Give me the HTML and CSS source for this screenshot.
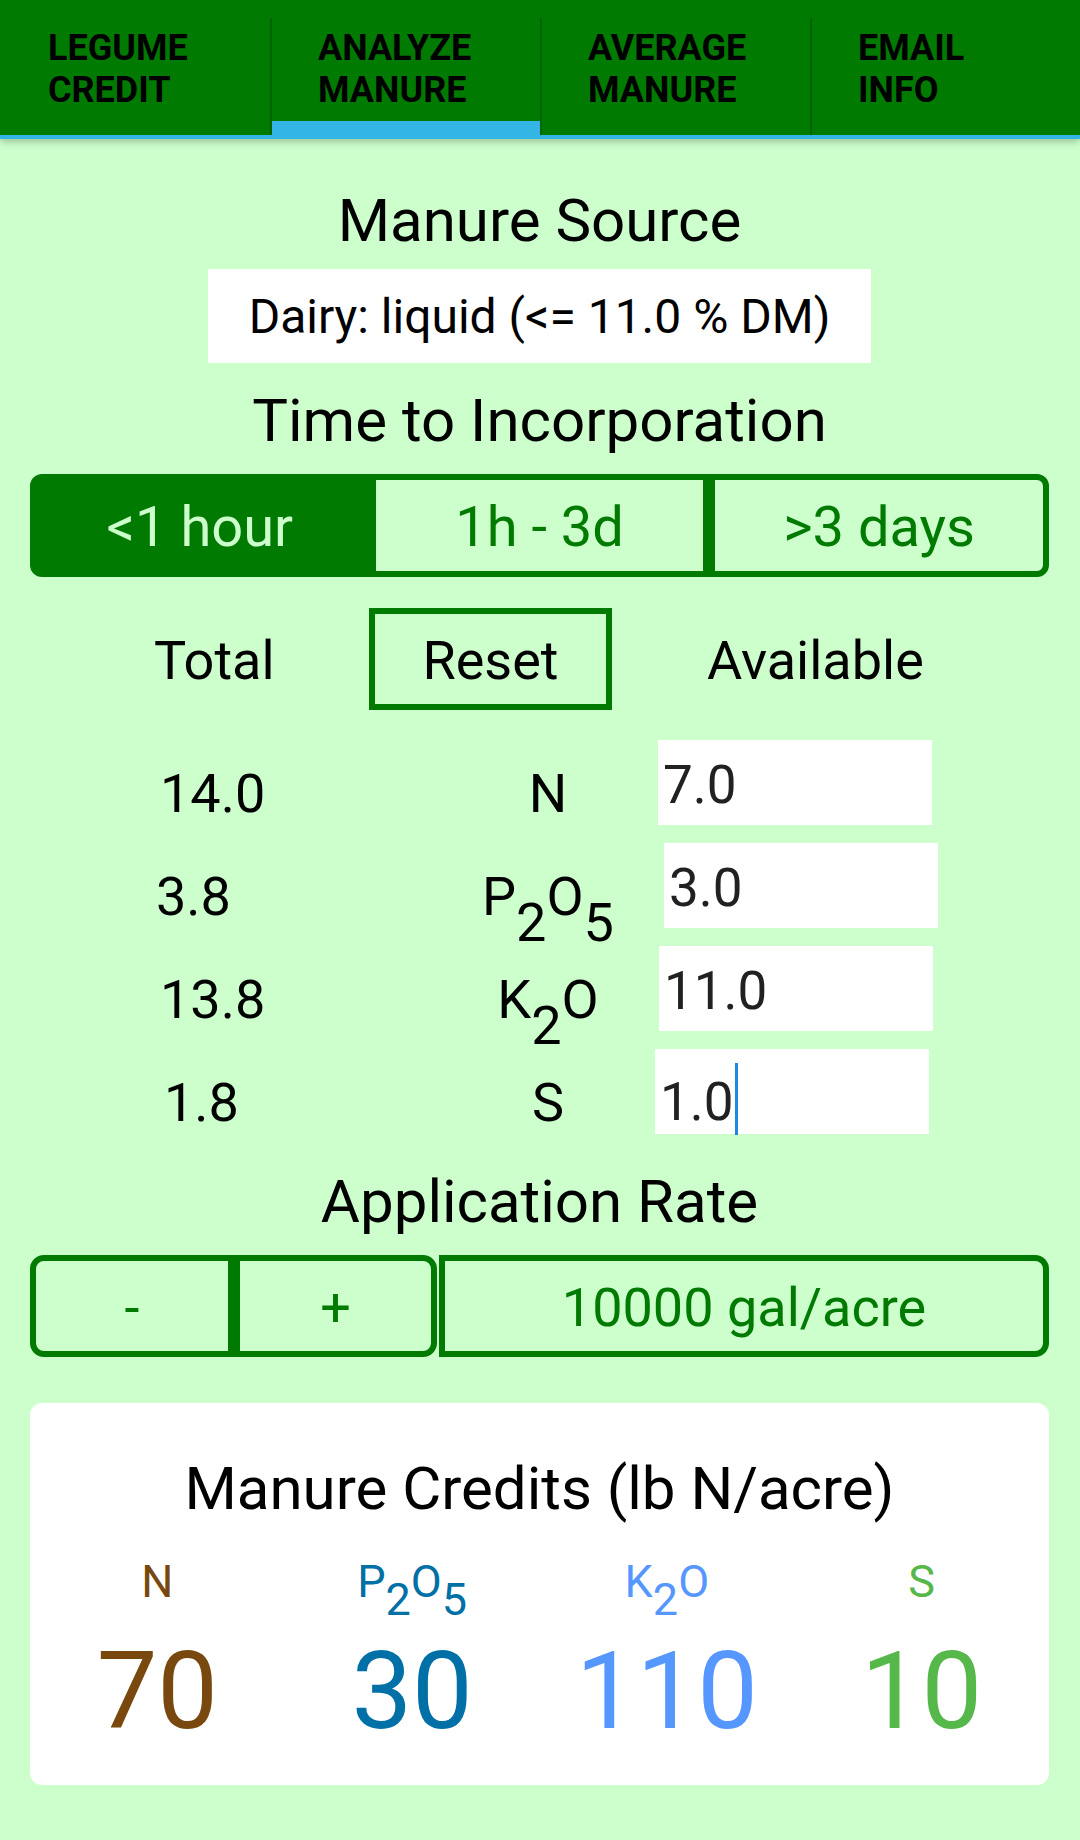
FILE: index.html
```html
<!DOCTYPE html>
<html lang="en">
<head>
<meta charset="utf-8">
<title>Analyze Manure</title>
<link rel="stylesheet" href="styles.css">
</head>
<body>
<header class="tabbar">
  <div class="tab">LEGUME<br>CREDIT</div>
  <div class="tab active">ANALYZE<br>MANURE</div>
  <div class="tab">AVERAGE<br>MANURE</div>
  <div class="tab">EMAIL<br>INFO</div>
</header>
<main class="content">
  <h2 class="title t-source">Manure Source</h2>
  <div class="source-wrap"><div class="source">Dairy: liquid (&lt;= 11.0 % DM)</div></div>

  <h2 class="title t-time">Time to Incorporation</h2>
  <div class="segmented">
    <div class="seg seg-on">&lt;1 hour</div>
    <div class="seg">1h - 3d</div>
    <div class="seg seg-last">&gt;3 days</div>
  </div>

  <div class="colhead">
    <div class="ch-total">Total</div>
    <div class="reset">Reset</div>
    <div class="ch-avail">Available</div>
  </div>

  <div class="nutrients">
    <div class="nrow r1"><div class="tot">14.0</div><div class="nut">N</div><div class="field">7.0</div></div>
    <div class="nrow r2"><div class="tot">3.8</div><div class="nut">P<span class="sub">2</span>O<span class="sub">5</span></div><div class="field">3.0</div></div>
    <div class="nrow r3"><div class="tot">13.8</div><div class="nut">K<span class="sub">2</span>O</div><div class="field">11.0</div></div>
    <div class="nrow r4"><div class="tot">1.8</div><div class="nut">S</div><div class="field">1.0<span class="caret"></span></div></div>
  </div>

  <h2 class="title t-rate">Application Rate</h2>
  <div class="rate">
    <div class="rbtn minus">-</div>
    <div class="rbtn plus">+</div>
    <div class="rbtn rate-val">10000 gal/acre</div>
  </div>

  <section class="card">
    <div class="card-title">Manure Credits (lb N/acre)</div>
    <div class="credits">
      <div class="credit c-n"><div class="clabel">N</div><div class="cval">70</div></div>
      <div class="credit c-p"><div class="clabel">P<span class="csub">2</span>O<span class="csub">5</span></div><div class="cval">30</div></div>
      <div class="credit c-k"><div class="clabel">K<span class="csub">2</span>O</div><div class="cval">110</div></div>
      <div class="credit c-s"><div class="clabel">S</div><div class="cval">10</div></div>
    </div>
  </section>
</main>
</body>
</html>
```
FILE: styles.css
```css
html, body {
  margin: 0;
  padding: 0;
}
body {
  background: #ccffcc;
  font-family: Roboto, "Noto Sans", "Liberation Sans", sans-serif;
  color: #000;
}

/* ---------- tab bar ---------- */
.tabbar {
  display: flex;
  background: #007a00;
  border-bottom: 4px solid #33b5e5;
  box-shadow: 0 2px 8px rgba(0, 0, 0, 0.28);
}
.tab {
  flex: 1 1 0;
  box-sizing: border-box;
  height: 117px;
  margin-top: 18px;
  padding: 9px 0 0 48px;
  font-size: 36px;
  line-height: 42px;
  font-weight: 700;
  color: #000;
}
.tab + .tab {
  border-left: 2px solid #006400;
  padding-left: 46px;
}
.tab.active {
  box-shadow: inset 0 -14px 0 #33b5e5;
}

/* ---------- content ---------- */
.content {
  padding: 0 31px 0 30px;
}
.title {
  margin: 0;
  font-size: 60px;
  line-height: 70px;
  font-weight: 400;
  text-align: center;
}
.t-source { margin-top: 47px; }
.t-time { margin-top: 23px; }
.t-rate { margin-top: 33px; }

.source-wrap {
  display: flex;
  justify-content: center;
  margin-top: 13px;
}
.source {
  box-sizing: border-box;
  width: 663px;
  height: 94px;
  background: #fff;
  font-size: 48px;
  line-height: 56px;
  padding-top: 20px;
  text-align: center;
  white-space: nowrap;
}

/* segmented control */
.segmented {
  display: flex;
  margin-top: 18px;
  height: 103px;
}
.seg {
  flex: 1 1 0;
  box-sizing: border-box;
  border: 6px solid #007a00;
  display: flex;
  align-items: center;
  justify-content: center;
  padding-top: 3px;
  font-size: 56px;
  color: #007a00;
}
.seg-on {
  background: #007a00;
  color: #ccffcc;
  border-radius: 12px 0 0 12px;
}
.seg-last {
  border-radius: 0 12px 12px 0;
}

/* column headings */
.colhead {
  display: flex;
  align-items: center;
  margin-top: 31px;
  height: 102px;
  font-size: 54px;
}
.ch-total {
  width: 339px;
  box-sizing: border-box;
  padding-left: 124px;
  padding-top: 2px;
}
.reset {
  width: 243px;
  height: 102px;
  box-sizing: border-box;
  border: 6px solid #007a00;
  display: flex;
  align-items: center;
  justify-content: center;
  padding-top: 2px;
}
.ch-avail {
  padding-left: 95px;
  padding-top: 2px;
}

/* nutrient rows */
.nutrients {
  margin-top: 30px;
  display: flex;
  flex-direction: column;
  gap: 18px;
}
.nrow {
  display: grid;
  grid-template-columns: 420px 196px 1fr;
  height: 85px;
  align-items: start;
  font-size: 54px;
}
.tot, .nut {
  padding-top: 23px;
  line-height: 62px;
}
.nut {
  text-align: center;
}
.sub {
  vertical-align: -0.48em;
  line-height: 0;
}
.field {
  width: 274px;
  height: 85px;
  box-sizing: border-box;
  background: #fff;
  padding: 14px 0 0 5px;
  line-height: 62px;
  font-size: 53px;
  color: #212121;
}
.r1 .tot { padding-left: 130px; }
.r2 .tot { padding-left: 126px; }
.r3 .tot { padding-left: 130px; }
.r4 .tot { padding-left: 134px; }
.r1 .field { margin-left: 12px; }
.r2 .field { margin-left: 18px; }
.r3 .field { margin-left: 13px; }
.r4 .field { margin-left: 9px; }
.caret {
  display: inline-block;
  width: 3px;
  height: 72px;
  margin-left: 1px;
  background: #1e88e5;
  vertical-align: -15px;
}

/* application rate */
.rate {
  display: flex;
  margin-top: 18px;
  height: 102px;
}
.rbtn {
  box-sizing: border-box;
  border: 6px solid #007a00;
  display: flex;
  align-items: center;
  justify-content: center;
  padding-top: 2px;
  font-size: 54px;
  color: #007a00;
}
.minus {
  width: 204px;
  border-radius: 14px 0 0 14px;
}
.plus {
  width: 203px;
  border-radius: 0 14px 14px 0;
}
.rate-val {
  flex: 1 1 0;
  margin-left: 2px;
  border-radius: 0 14px 14px 0;
}

/* credits card */
.card {
  margin-top: 46px;
  background: #fff;
  border-radius: 12px;
  padding: 51px 0 30px;
}
.card-title {
  font-size: 60px;
  line-height: 70px;
  text-align: center;
}
.credits {
  display: grid;
  grid-template-columns: repeat(4, 1fr);
  margin-top: 31px;
  text-align: center;
}
.clabel {
  font-size: 45px;
  line-height: 53px;
}
.csub {
  vertical-align: -0.4em;
  line-height: 0;
}
.cval {
  font-size: 108px;
  line-height: 127px;
  margin-top: 20px;
}
.c-n { color: #79480f; }
.c-p { color: #0070a7; }
.c-k { color: #5597ff; }
.c-s { color: #56b84a; }
```
